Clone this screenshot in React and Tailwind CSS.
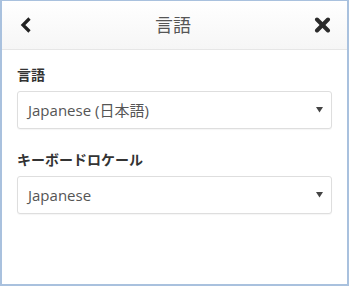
import React from "react";

function SelectBox({ value }) {
  return (
    <div className="h-[38px] flex items-center justify-between border border-[#dedede] rounded-[3px] bg-white pl-[10px] pr-[7px] shadow-[0_1px_1px_rgba(0,0,0,0.04)]">
      <span className="text-[15px] text-[#555]">{value}</span>
      <svg width="7" height="6" viewBox="0 0 7 6" className="mr-[1px]">
        <polygon points="0,0 7,0 3.5,5.5" fill="#444" />
      </svg>
    </div>
  );
}

export default function App() {
  return (
    <div
      className="w-[349px] h-[286px] bg-white border-2 border-t border-[#a9c1de] flex flex-col overflow-hidden"
      style={{ fontFamily: '"Open Sans", "Noto Sans CJK JP", sans-serif' }}
    >
      {/* header */}
      <div className="h-[49px] shrink-0 flex items-center justify-between px-[18px] bg-gradient-to-b from-white to-[#f6f6f6] border-b border-[#e6e6e6]">
        <svg width="12" height="16" viewBox="0 0 12 16">
          <polyline
            points="9.5,1.5 3,8 9.5,14.5"
            fill="none"
            stroke="#222"
            strokeWidth="3.2"
          />
        </svg>
        <span className="text-[18px] text-[#555] leading-none">言語</span>
        <svg width="17" height="16" viewBox="0 0 17 16" className="-mr-[2px]">
          <g stroke="#2b2b2b" strokeWidth="4" strokeLinecap="round">
            <line x1="3" y1="2.5" x2="14" y2="13.5" />
            <line x1="14" y1="2.5" x2="3" y2="13.5" />
          </g>
        </svg>
      </div>

      {/* content */}
      <div className="px-[15px] pt-[15px] flex flex-col">
        <div className="text-[14px] font-bold text-[#333] leading-[20px] mb-[6px]">言語</div>
        <SelectBox value="Japanese (日本語)" />
        <div className="text-[14px] font-bold text-[#333] leading-[20px] mt-[21px] mb-[6px]">
          キーボードロケール
        </div>
        <SelectBox value="Japanese" />
      </div>
    </div>
  );
}
